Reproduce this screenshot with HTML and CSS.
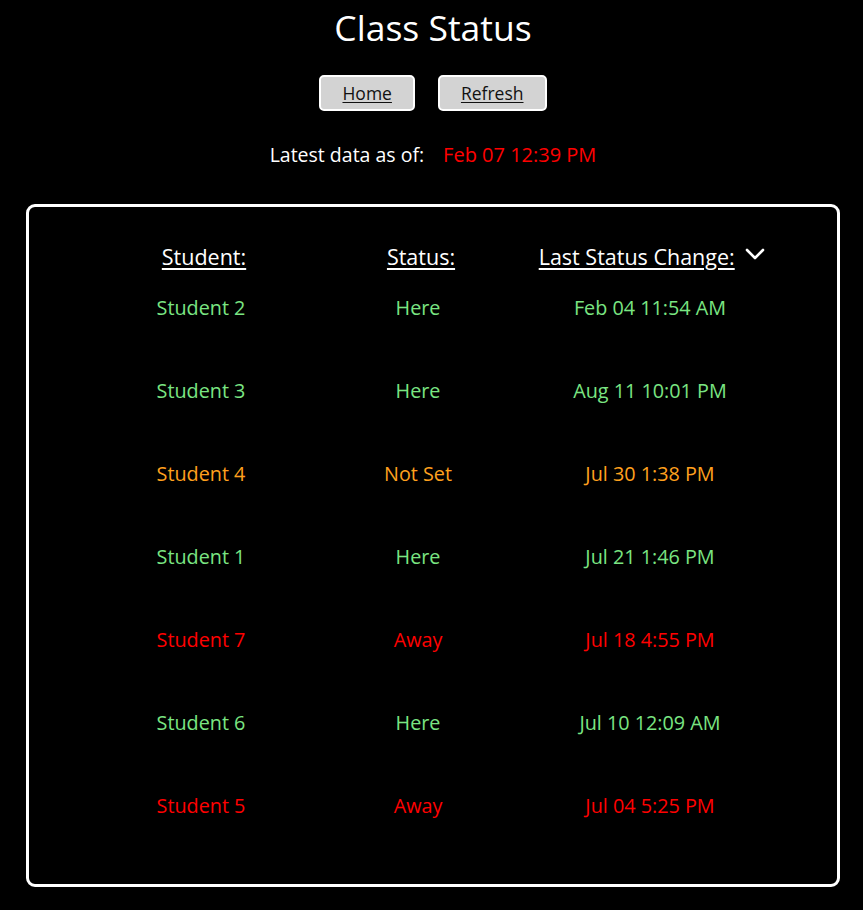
FILE: index.html
```html
<!DOCTYPE html>
<html>
<head>
<meta charset="utf-8">
<link rel="stylesheet" href="styles.css">
</head>
<body>
<div class="page">
  <h1 class="title">Class Status</h1>
  <div class="buttons">
    <a class="btn" href="#">Home</a>
    <a class="btn" href="#">Refresh</a>
  </div>
  <div class="latest">
    <span>Latest data as of:</span>
    <span class="red">Feb 07 12:39 PM</span>
  </div>
  <div class="card">
    <div class="grid">
      <div class="head"><span class="ul">Student:</span></div>
      <div class="head"><span class="ul">Status:</span></div>
      <div class="head"><span class="ul">Last Status Change:</span>
        <svg class="chev" width="20" height="14" viewBox="0 0 20 14"><path d="M2 3 L10 11 L18 3" fill="none" stroke="#fff" stroke-width="2.6" stroke-linecap="round" stroke-linejoin="round"/></svg>
      </div>

      <div class="cell green">Student 2</div><div class="cell green">Here</div><div class="cell green">Feb 04 11:54 AM</div>
      <div class="cell green">Student 3</div><div class="cell green">Here</div><div class="cell green">Aug 11 10:01 PM</div>
      <div class="cell orange">Student 4</div><div class="cell orange">Not Set</div><div class="cell orange">Jul 30 1:38 PM</div>
      <div class="cell green">Student 1</div><div class="cell green">Here</div><div class="cell green">Jul 21 1:46 PM</div>
      <div class="cell red">Student 7</div><div class="cell red">Away</div><div class="cell red">Jul 18 4:55 PM</div>
      <div class="cell green">Student 6</div><div class="cell green">Here</div><div class="cell green">Jul 10 12:09 AM</div>
      <div class="cell red">Student 5</div><div class="cell red">Away</div><div class="cell red">Jul 04 5:25 PM</div>
    </div>
  </div>
</div>
</body>
</html>
```

FILE: styles.css
```css
html, body {
  margin: 0;
  padding: 0;
  background: #000;
}
body {
  font-family: "Open Sans", "Noto Sans", sans-serif;
  color: #fff;
}
.page {
  display: flex;
  flex-direction: column;
  align-items: center;
  padding: 0 23px 0 26px;
}
.title {
  margin: 5px 0 0 0;
  font-size: 35.5px;
  font-weight: 400;
  line-height: 44px;
}
.buttons {
  display: flex;
  gap: 23px;
  margin-top: 26px;
}
.btn {
  display: block;
  box-sizing: border-box;
  height: 36px;
  padding: 0 21px;
  line-height: 32px;
  background: #d3d3d3;
  border: 2px solid #fff;
  border-radius: 5px;
  color: #111;
  font-size: 17.5px;
  text-decoration: underline;
  text-underline-offset: 2px;
}
.latest {
  display: flex;
  gap: 19px;
  margin-top: 32px;
  font-size: 19.5px;
  line-height: 24px;
}
.latest .red { font-size: 20px; }
.red { color: #ff0000; }
.green { color: #7ae582; }
.orange { color: #ffa01e; }
.card {
  align-self: stretch;
  margin-top: 37px;
  height: 683px;
  box-sizing: border-box;
  border: 3px solid #fff;
  border-radius: 9px;
  padding: 36px 0 0 61px;
}
.grid {
  display: grid;
  grid-template-columns: 222px 212px 252px;
  grid-auto-rows: 83px;
  grid-template-rows: 51px;
  align-items: start;
}
.head {
  text-align: center;
  font-size: 21.5px;
  line-height: 28px;
  padding-left: 6px;
}
.head:nth-child(3) { padding-left: 4px; }
.ul {
  text-decoration: underline;
  text-decoration-thickness: 2px;
  text-underline-offset: 3px;
}
.chev {
  margin-left: 5px;
  vertical-align: 4px;
}
.cell {
  text-align: center;
  font-size: 19.8px;
  line-height: 28px;
}
```
